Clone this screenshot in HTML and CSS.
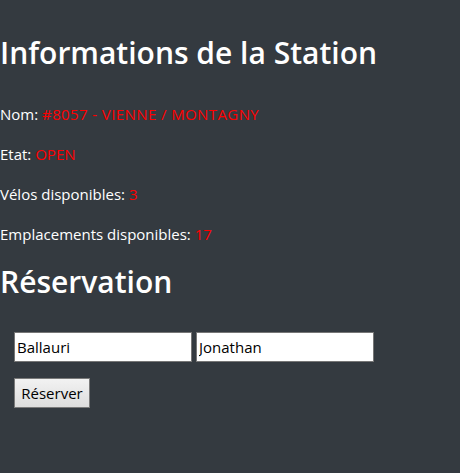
FILE: index.html
```html
<!DOCTYPE html>
<html lang="fr">
<head>
<meta charset="utf-8">
<title>Informations de la Station</title>
<link rel="stylesheet" href="styles.css">
</head>
<body>
<main class="page">
  <h1 class="title">Informations de la Station</h1>
  <p class="info">Nom: <span class="value value-caps">#8057 - VIENNE / MONTAGNY</span></p>
  <p class="info">Etat: <span class="value">OPEN</span></p>
  <p class="info">Vélos disponibles: <span class="value">3</span></p>
  <p class="info">Emplacements disponibles: <span class="value">17</span></p>
  <h2 class="title title-sub">Réservation</h2>
  <form class="form">
    <div class="fields">
      <input class="field" type="text" value="Ballauri">
      <input class="field" type="text" value="Jonathan">
    </div>
    <button class="btn" type="button">Réserver</button>
  </form>
</main>
</body>
</html>
```

FILE: styles.css
```css
html, body {
  margin: 0;
  padding: 0;
  background: #343a40;
  height: 100%;
}
body {
  font-family: "Open Sans", "Noto Sans", sans-serif;
  color: #ffffff;
}
.page {
  padding-top: 33px;
}
.title {
  margin: 0;
  font-size: 30px;
  font-weight: 600;
  line-height: 40px;
}
.title-sub {
  margin-top: 8px;
}
.info {
  margin: 0 0 16px 0;
  font-size: 15px;
  line-height: 24px;
}
.info:first-of-type {
  margin-top: 29px;
}
.value {
  color: #ff0000;
}
.value-caps {
  letter-spacing: 0.4px;
}
.form {
  padding: 30px 14px 0 14px;
}
.fields {
  display: flex;
  gap: 4px;
  margin-bottom: 16px;
}
.field {
  box-sizing: border-box;
  width: 178px;
  height: 30px;
  margin: 0;
  padding: 1px 2px;
  border: 1px solid #767676;
  background: #ffffff;
  color: #000000;
  font-family: "Open Sans", "Noto Sans", sans-serif;
  font-size: 15px;
}
.btn {
  box-sizing: border-box;
  width: 76px;
  height: 30px;
  margin: 0;
  padding: 0 6px;
  border: 1px solid #7a7a7a;
  background: linear-gradient(#f2f2f2, #dddddd);
  color: #000000;
  font-family: "Open Sans", "Noto Sans", sans-serif;
  font-size: 15px;
}
```
